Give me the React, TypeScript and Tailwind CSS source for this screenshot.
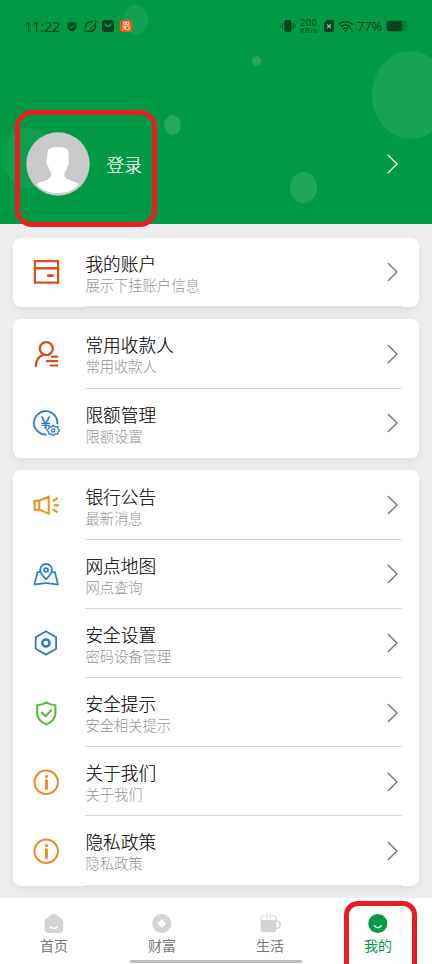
import type { ReactNode } from 'react';

type Item = {
    title: string;
    subtitle: string;
    icon: ReactNode;
};

const Icon = ({ color, children }: { color: string; children: ReactNode }) => (
    <svg
        width="28"
        height="28"
        viewBox="0 0 28 28"
        fill="none"
        stroke={color}
        strokeWidth="1.8"
        strokeLinecap="round"
        strokeLinejoin="round"
        className="shrink-0"
    >
        {children}
    </svg>
);

const InfoIcon = () => (
    <Icon color="#ee8b1c">
        <circle cx="14.2" cy="14.2" r="11.7" strokeWidth="2" />
        <circle cx="14.4" cy="8.5" r="1.6" fill="#ee8b1c" stroke="none" />
        <path d="M14.4 11.5v10.3" strokeWidth="3" strokeLinecap="butt" />
    </Icon>
);

const groups: Item[][] = [
    [
        {
            title: '我的账户',
            subtitle: '展示下挂账户信息',
            icon: (
                <Icon color="#dc4f16">
                    <path d="M2.9 3.1h23.2v21.6H2.9z" strokeWidth="2.2" strokeLinejoin="miter" />
                    <path d="M3 10.2h23" strokeWidth="2.4" />
                    <path d="M16.2 17.6h4.6" strokeWidth="2.6" />
                </Icon>
            ),
        },
    ],
    [
        {
            title: '常用收款人',
            subtitle: '常用收款人',
            icon: (
                <Icon color="#dc4f16">
                    <circle cx="14.3" cy="8.6" r="6.5" strokeWidth="2.4" />
                    <path d="M3.9 26c0-5.6 2.4-9.4 7-11.2" strokeWidth="2.4" />
                    <path d="M20 16.7h5.3M14.7 21.1h10.6M18.5 25.5h6.8" strokeWidth="2.2" />
                </Icon>
            ),
        },
        {
            title: '限额管理',
            subtitle: '限额设置',
            icon: (
                <Icon color="#2a79da">
                    <path d="M14.5 25.5A11.7 11.7 0 1 1 25.3 15.2" strokeLinecap="butt" />
                    <path d="M21.3 16.3l1.7 1.6 2.5-.3.5 2.3 1.6 1.5-1.6 1.5-.5 2.3-2.5-.3-1.7 1.6-1.7-1.6-2.5.3-.5-2.3-1.6-1.5 1.6-1.5.5-2.3 2.5.3z" strokeWidth="1.3" fill="#fff" />
                    <circle cx="21.3" cy="21.4" r="1.6" strokeWidth="1.3" />
                    <text
                        x="13.6"
                        y="20"
                        textAnchor="middle"
                        fontSize="18"
                        fontFamily="Noto Sans CJK SC, sans-serif"
                        fill="#2a79da"
                        strokeWidth="0.3"
                    >
                        ¥
                    </text>
                </Icon>
            ),
        },
    ],
    [
        {
            title: '银行公告',
            subtitle: '最新消息',
            icon: (
                <Icon color="#f08c18">
                    <path d="M2.6 9.7h4.7v9H2.6zM7.3 9.7l9.4-3.9v16.8l-9.4-3.9" strokeWidth="2" strokeLinejoin="miter" />
                    <path d="M21.6 9.6l3.2-2M22.6 14.2h3.6M21.6 18.8l3.2 2" strokeWidth="2.1" />
                </Icon>
            ),
        },
        {
            title: '网点地图',
            subtitle: '网点查询',
            icon: (
                <Icon color="#267de0">
                    <path d="M14.1 19.1c-3.4-3.3-5.9-6-5.9-9.2a5.9 5.9 0 0 1 11.8 0c0 3.2-2.5 5.9-5.9 9.2z" />
                    <circle cx="14.1" cy="10" r="1.9" />
                    <path d="M7.5 12.1H5.5L2.5 24.4c4-.2 7.2-1.2 11.6-1.2s7.8 1 11.8 1.2l-3-12.3h-2" />
                </Icon>
            ),
        },
        {
            title: '安全设置',
            subtitle: '密码设备管理',
            icon: (
                <Icon color="#2a79da">
                    <path d="M13.9 2.3l10.2 5.9v11.5l-10.2 5.9-10.2-5.9V8.2z" strokeLinejoin="miter" />
                    <circle cx="13.9" cy="14" r="3.6" strokeWidth="2.5" />
                </Icon>
            ),
        },
        {
            title: '安全提示',
            subtitle: '安全相关提示',
            icon: (
                <Icon color="#5cb83f">
                    <path d="M14.3 3.3c2.8 1.9 5.9 2.7 9.1 2.9v8c0 5.3-3.7 9-9.1 11.2-5.4-2.2-9.1-5.9-9.1-11.2v-8c3.2-.2 6.3-1 9.1-2.9z" strokeWidth="2.1" />
                    <path d="M9.7 13.6l3.7 3.7 6-6" strokeWidth="2.1" />
                </Icon>
            ),
        },
        { title: '关于我们', subtitle: '关于我们', icon: <InfoIcon /> },
        { title: '隐私政策', subtitle: '隐私政策', icon: <InfoIcon /> },
    ],
];

const Chevron = ({ className }: { className: string }) => (
    <svg width="11" height="20" viewBox="0 0 11 20" fill="none" stroke="currentColor" strokeWidth="1.4" className={className}>
        <path d="M.9.9L10 10 .9 19.1" />
    </svg>
);

const StatusBar = () => (
    <div className="flex h-[52px] items-center pl-6 text-[#02461f]">
        <span className="w-[43px] pt-px font-['Noto_Sans'] text-[15px] tracking-[-0.5px]">11:22</span>
        <svg width="10" height="11" viewBox="0 0 10 11" className="mr-[7px]">
            <path d="M5 .4l4.500 1.500v3.600C9.500 8 7.600 9.700 5 10.700 2.400 9.700.5 8 .5 5.500V1.900z" fill="currentColor" />
            <path d="M2.9 5.4l1.600 1.600 2.800-3" fill="none" stroke="#009a44" strokeWidth="1.1" />
        </svg>
        {/* planet with a ring */}
        <svg width="13" height="13" viewBox="0 0 13 13" className="mr-[5px]" fill="none" stroke="currentColor">
            <path d="M1.700 8.300C.6 4 5 .5 8.900 2.100" strokeWidth="1.600" />
            <path d="M4.100 10.900C8 12.500 12.400 9 11.300 4.700" strokeWidth="1.600" />
            <path d="M9.800 1.400c1.300-.5 2.400-.4 2.500.3.300 2.300-8 10.300-10.800 10-.9-.1-1-.9-.4-2.200" strokeWidth="1" />
        </svg>
        <svg width="12" height="12" viewBox="0 0 12 12" className="mr-1.5">
            <rect width="12" height="12" rx="2.5" fill="currentColor" />
            <path d="M3 3.500c.8 3.500 5.200 3.500 6 0" fill="none" stroke="#12a052" strokeWidth="1.3" />
        </svg>
        <svg width="12" height="12" viewBox="0 0 12 12" fill="none" stroke="#ffe6d8">
            <rect width="12" height="12" rx="2" fill="#ec5a1b" stroke="none" />
            <path d="M3.500 2.200h2.200v2.500H3.500zM6.500 2h2.300v2.500H6.500zM5.500 6h3.700v3.700H5.500zM2.500 6.200L5 8v-2M2.500 9.700L5 8" strokeWidth=".9" />
        </svg>

        <svg width="16" height="14" viewBox="0 0 16 14" className="ml-[148px] shrink-0" stroke="currentColor">
            <rect x="4.3" y="1" width="7.2" height="12" rx="1.8" fill="currentColor" stroke="none" />
            <path d="M2.500 4.200v5.600M.7 5.500v3M13.300 4.200v5.600M15.100 5.500v3" strokeWidth=".9" />
        </svg>
        <div className="ml-1 flex w-[22px] shrink-0 flex-col font-[Roboto]">
            <span className="text-[9.5px] leading-[9px] tracking-[0.4px]">200</span>
            <span className="text-[7.5px] leading-[7px] tracking-[0.2px]">KB/s</span>
        </div>
        <svg width="10" height="12" viewBox="0 0 10 12" className="ml-0.5 shrink-0">
            <path d="M3 0h5.500A1.500 1.500 0 0 1 10 1.500v9A1.500 1.500 0 0 1 8.500 12h-7A1.500 1.500 0 0 1 0 10.500V3z" fill="currentColor" />
            <path d="M3.200 4.500l3.600 3.600M6.800 4.500L3.200 8.100" stroke="#8ed0a7" strokeWidth="1.2" />
        </svg>
        <svg width="16" height="13" viewBox="0 0 16 13" className="ml-1 shrink-0" fill="none" stroke="currentColor" strokeWidth="1.6">
            <path d="M.8 4.300c4-3.600 9.700-3.600 13.700 0M3 6.800c2.700-2.400 6.600-2.400 9.300 0M5.200 9.100c1.500-1.200 3.400-1.200 4.900 0" />
            <circle cx="7.6" cy="11" r="1" fill="currentColor" stroke="none" />
            <path d="M12.600 8v1.500M14 10v1.800" strokeWidth="1.2" />
        </svg>
        <span className="ml-[3px] w-[29px] shrink-0 pt-px font-['Noto_Sans'] text-[13px] tracking-[-0.3px]">77%</span>
        <svg width="22" height="12" viewBox="0 0 22 12" className="shrink-0">
            <rect x=".5" y=".7" width="19.5" height="10.6" rx="2.5" fill="#048038" />
            <path d="M3 .7h13v10.600H3A2.500 2.500 0 0 1 .5 8.800V3.200A2.500 2.500 0 0 1 3 .7z" fill="currentColor" />
            <path d="M20.300 4v4c1-.5 1-3.500 0-4z" fill="#048038" />
        </svg>
    </div>
);

const Avatar = () => (
    <svg width="64" height="64" viewBox="0 0 64 64">
        <circle cx="32" cy="32" r="31.7" fill="#c9cac9" />
        <path
            d="M21.500 21c0-4.800 4.500-6 10.500-6s10.500 1.200 10.500 6v6.800c1 .5.500 5.300-1 6.200-.5 3-1.500 5.200-3 6.600v3.500c2 4.800 9.500 4.800 14.700 8C48.200 58.200 40.500 61.300 32 61.300s-16.200-3.100-21.600-9.200c5.200-3.200 12.700-3.200 14.700-8v-3.500c-1.500-1.400-2.500-3.600-3-6.600-1.500-.9-2-5.700-1-6.200z"
            fill="#fff"
        />
    </svg>
);

const tabs = [
    {
        label: '首页',
        icon: (
            <>
                <path d="M8 1.200a3 3 0 0 1 3.500 0l6 4.300c1.200.9 1.700 1.800 1.700 3.200v7.300c0 2.700-1.300 4-4 4H4.500c-2.700 0-4-1.300-4-4V8.700c0-1.400.5-2.300 1.700-3.200z" fill="#d3d5d4" />
                <path d="M6.500 14c1.600 1.800 5 1.800 6.600 0" stroke="#fff" strokeWidth="1.7" />
            </>
        ),
    },
    {
        label: '财富',
        icon: (
            <>
                <circle cx="9.8" cy="10.5" r="9.5" fill="#d3d5d4" />
                <path d="M9.800 6.100l4.400 4.400-4.400 4.400-4.400-4.400z" fill="#fff" />
            </>
        ),
    },
    {
        label: '生活',
        icon: (
            <>
                <path d="M.6 7h15.800v9c0 2.200-1.200 3.300-3.400 3.300H4C1.800 19.300.6 18.200.6 16z" fill="#d3d5d4" />
                <path d="M16.200 8.300h1c4 0 4 6.500 0 7h-1" stroke="#d3d5d4" strokeWidth="1.6" />
                <path d="M.6 7.500C.6 4 2 2.700 4.500 2.500M16.400 7.500c0-3.500-1.400-4.800-3.900-5M6.800.5c1 1.300-1 2.200 0 4.500M10.300.5c1 1.300-1 2.200 0 4.500" stroke="#d3d5d4" strokeWidth="1.2" />
            </>
        ),
    },
    {
        label: '我的',
        icon: (
            <>
                <circle cx="9.8" cy="10.5" r="9.5" fill="#079944" />
                <path d="M6.400 12.600c1.700 2.700 5.200 2.700 6.900 0" stroke="#fff" strokeWidth="1.3" />
            </>
        ),
    },
];

export default function App() {
    return (
        <div className="relative flex h-[964px] w-[432px] flex-col overflow-hidden bg-[#eceef0] font-['Noto_Sans_CJK_SC',sans-serif]">
            <header className="relative h-[224px] shrink-0 overflow-hidden bg-[#009a44]">
                {/* bubbles */}
                <div className="absolute top-[5px] left-[123px] h-[29px] w-[25px] rounded-[50%] bg-white/7" />
                <div className="absolute top-[51px] left-[372px] h-[88px] w-[76px] rounded-[50%] bg-white/9" />
                <div className="absolute top-[56px] left-[252px] h-[10px] w-[9px] rounded-[50%] bg-white/15" />
                <div className="absolute top-[115px] left-[164px] h-[20px] w-[17px] rounded-[50%] bg-white/15" />
                <div className="absolute top-[172px] left-[290px] h-[31px] w-[27px] rounded-[50%] bg-white/12" />
                <div className="absolute top-[128px] left-[3px] h-[60px] w-[52px] rounded-[50%] bg-white/5" />

                <div className="relative">
                    <StatusBar />
                    <div className="mt-[80px] flex items-center pr-[34px] pl-[25.5px]">
                        <Avatar />
                        <span className="ml-[17px] text-[17.7px] leading-6 font-light text-white [-webkit-text-stroke:0.2px_#fff]">登录</span>
                        <Chevron className="ml-auto text-white" />
                    </div>
                </div>
            </header>

            <main className="flex flex-1 flex-col gap-[12.7px] px-[13px] pt-[13.5px]">
                {groups.map((items, i) => (
                    <section key={i} className="rounded-lg bg-white shadow-[0_3px_10px_rgba(0,0,0,0.07)]">
                        {items.map((item, j) => (
                            <div key={item.title} className="flex h-[69.2px] pl-[19px]">
                                <div className="flex w-[53.4px] items-center">{item.icon}</div>
                                <div
                                    className={`mr-[17.5px] flex flex-1 items-center border-b ${
                                        j < items.length - 1 ? 'border-[#d5d6d7]' : i === 1 ? 'border-transparent' : 'border-[#e0e1e2]'
                                    }`}
                                >
                                    <div className="flex flex-col pt-[3px]">
                                        <span className="text-[17.7px] leading-[22px] font-light text-black [-webkit-text-stroke:0.1px_#000]">{item.title}</span>
                                        <span className="text-[14.3px] leading-[21px] font-light text-[#949494]">{item.subtitle}</span>
                                    </div>
                                    <Chevron className="mt-px mr-1 ml-auto text-[#777]" />
                                </div>
                            </div>
                        ))}
                    </section>
                ))}
            </main>

            <nav className="relative grid h-[66px] shrink-0 grid-cols-4 bg-white pt-[14.5px]">
                {tabs.map((tab, i) => (
                    <div key={tab.label} className="flex flex-col items-center">
                        <svg width="20" height="21" viewBox="0 0 20 21" fill="none" strokeLinecap="round" className="overflow-visible">
                            {tab.icon}
                        </svg>
                        <span className={`mt-px text-[14px] leading-5 ${i === 3 ? 'text-[#079944]' : 'text-[#777]'}`}>{tab.label}</span>
                    </div>
                ))}
                <div className="absolute bottom-[1px] left-[130px] h-[3px] w-[172px] rounded-full bg-[#bbb]" />
            </nav>

            {/* highlighted areas */}
            <div className="absolute top-[110px] left-[15px] h-[117px] w-[142px] rounded-[17px] border-[5px] border-[#e71f25]" />
            <div className="absolute top-[901px] left-[344px] h-[80px] w-[73px] rounded-[14px] border-[5px] border-[#e71f25]" />
        </div>
    );
}
